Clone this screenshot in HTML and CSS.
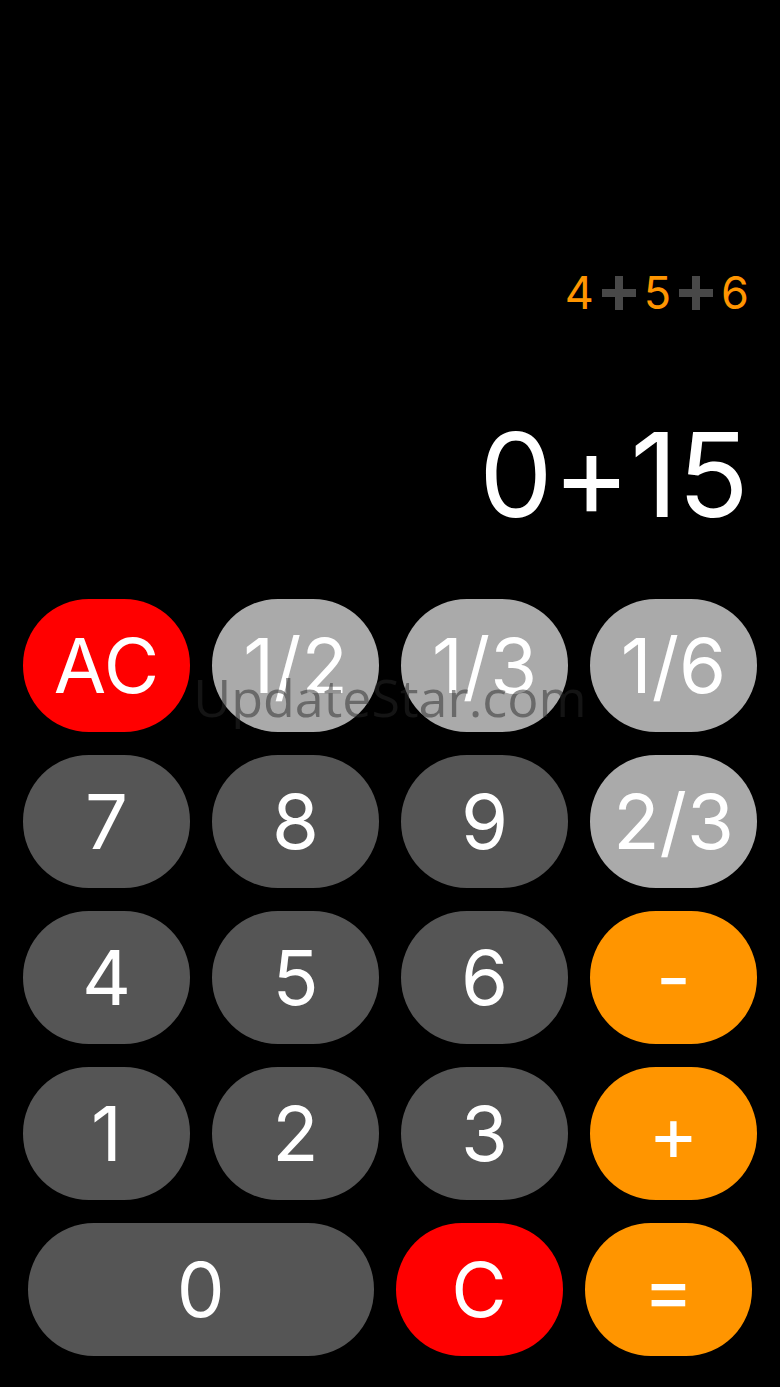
FILE: index.html
```html
<!DOCTYPE html>
<html lang="en">
<head>
<meta charset="utf-8">
<meta name="viewport" content="width=device-width, initial-scale=1">
<title>Calculator</title>
<link rel="stylesheet" href="styles.css">
</head>
<body>
<main class="calculator">
  <section class="display" aria-label="Display">
    <p class="history">
      <span>4</span>
      <svg class="plus" viewBox="0 0 34 34" role="img" aria-label="plus"><path d="M13 0h8v13h13v8H21v13h-8V21H0v-8h13z"/></svg>
      <span>5</span>
      <svg class="plus" viewBox="0 0 34 34" role="img" aria-label="plus"><path d="M13 0h8v13h13v8H21v13h-8V21H0v-8h13z"/></svg>
      <span>6</span>
    </p>
    <output class="result">0+15</output>
  </section>
  <section class="keypad" aria-label="Keypad">
    <div class="keys">
      <button class="key clear" type="button">AC</button>
      <button class="key fraction" type="button">1/2</button>
      <button class="key fraction" type="button">1/3</button>
      <button class="key fraction" type="button">1/6</button>
      <button class="key" type="button">7</button>
      <button class="key" type="button">8</button>
      <button class="key" type="button">9</button>
      <button class="key fraction" type="button">2/3</button>
      <button class="key" type="button">4</button>
      <button class="key" type="button">5</button>
      <button class="key" type="button">6</button>
      <button class="key operator" type="button">-</button>
      <button class="key" type="button">1</button>
      <button class="key" type="button">2</button>
      <button class="key" type="button">3</button>
      <button class="key operator" type="button">+</button>
    </div>
    <div class="keys bottom">
      <button class="key" type="button">0</button>
      <button class="key clear" type="button">C</button>
      <button class="key operator" type="button">=</button>
    </div>
    <div class="watermark">UpdateStar.com</div>
  </section>
</main>
</body>
</html>
```
FILE: styles.css
```css
* {
  box-sizing: border-box;
}

body {
  margin: 0;
  background: #000;
  color: #fff;
  font-family: Inter, "Liberation Sans", sans-serif;
  font-feature-settings: "calt" 0;
}

.calculator {
  display: flex;
  flex-direction: column;
  min-height: 100vh;
}

.display {
  display: flex;
  flex: 1;
  flex-direction: column;
  align-items: flex-end;
  justify-content: flex-end;
  padding: 0 31px 53px;
}

.history {
  display: flex;
  align-items: center;
  gap: 8px;
  margin: 0 0 84px;
  color: #ff9500;
  font-size: 45px;
  line-height: 54px;
}

.plus {
  width: 34px;
  height: 34px;
  fill: #484848;
}

.result {
  font-size: 117px;
  line-height: 142px;
}

.keypad {
  position: relative;
  display: grid;
  gap: 23px;
  padding: 0 23px 31px;
}

.keys {
  display: grid;
  grid-template-columns: repeat(4, 1fr);
  gap: 23px 22px;
}

.bottom {
  grid-template-columns: 345fr 167fr 167fr;
  padding: 0 5px;
}

.key {
  padding: 20px 0;
  border: 0;
  border-radius: 66px;
  background: #555;
  color: inherit;
  font: inherit;
  font-feature-settings: inherit;
  font-size: 76px;
  line-height: 93px;
  text-align: center;
}

.clear {
  background: #f00;
}

.fraction {
  background: #aaa;
}

.operator {
  background: #ff9500;
}

.watermark {
  position: absolute;
  top: 61px;
  left: 0;
  width: 100%;
  color: rgba(40, 40, 40, 0.5);
  font-family: "Open Sans", "Noto Sans", sans-serif;
  font-size: 52px;
  line-height: 74px;
  text-align: center;
  pointer-events: none;
}
```
